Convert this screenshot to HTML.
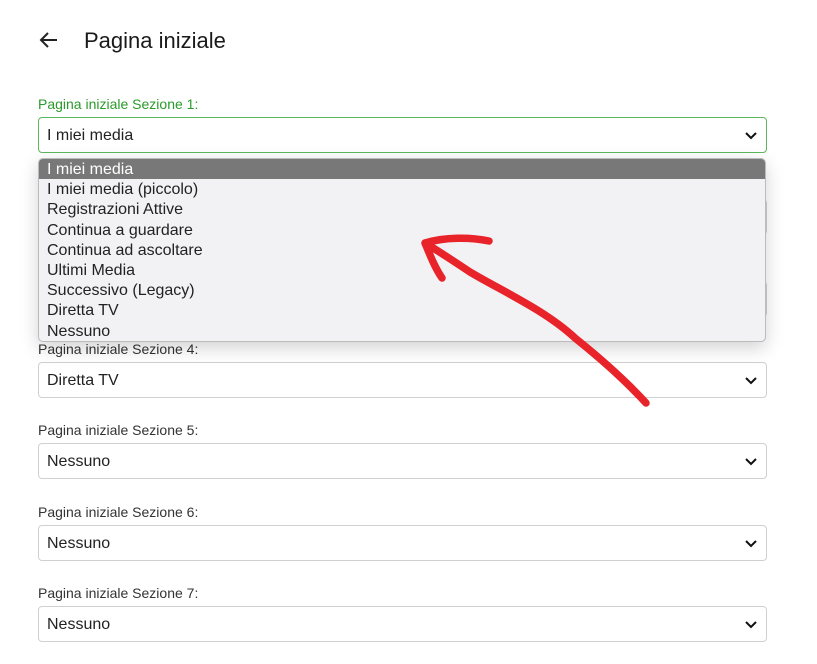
<!DOCTYPE html>
<html><head><meta charset="utf-8"><style>
body{margin:0;width:817px;height:664px;background:#fff;font-family:"Liberation Sans",Roboto,sans-serif;position:relative;overflow:hidden;color:#222}
.t{position:absolute;left:84px;top:28px;font-size:22px;color:#1a1a1a}
.lbl{position:absolute;left:38px;font-size:14px;color:#333}
.sel{position:absolute;left:38px;width:727px;height:34px;border:1px solid #d0d0d0;border-radius:4px;background:#fff;box-sizing:content-box}
.sel span{position:absolute;left:8px;top:9px;font-size:16px;color:#222}
.sel svg{position:absolute;right:8px;top:13px}
.dd{position:absolute;left:38px;top:158px;width:726px;height:182px;background:#f2f2f4;border:1px solid #bbb;border-radius:5px;box-shadow:0 6px 18px rgba(0,0,0,.18);overflow:hidden}
.dd div{height:20.2px;line-height:21px;padding-left:8px;font-size:16px;color:#222}
.dd .h{background:#787878;color:#fff}
</style></head><body>
<svg style="position:absolute;left:38px;top:31px" width="20" height="18" viewBox="0 0 20 18"><path d="M19 9H3M10 2L3 9l7 7" fill="none" stroke="#222" stroke-width="2"/></svg>
<div class="t">Pagina iniziale</div>
<div class="lbl" style="top:96px;color:#2a9a2a">Pagina iniziale Sezione 1:</div>
<div class="sel" style="top:117px;border-color:#5cb85c"><span>I miei media</span><svg width="14" height="10"><path d="M2 2l5 5 5-5" fill="none" stroke="#111" stroke-width="2"/></svg></div>
<div class="sel" style="top:199px"><span></span></div>
<div class="sel" style="top:281px"><span></span><svg width="14" height="10"><path d="M2 2l5 5 5-5" fill="none" stroke="#111" stroke-width="2"/></svg></div>
<div class="lbl" style="top:341px">Pagina iniziale Sezione 4:</div>
<div class="sel" style="top:362px"><span>Diretta TV</span><svg width="14" height="10"><path d="M2 2l5 5 5-5" fill="none" stroke="#111" stroke-width="2"/></svg></div>
<div class="lbl" style="top:422px">Pagina iniziale Sezione 5:</div>
<div class="sel" style="top:443px"><span>Nessuno</span><svg width="14" height="10"><path d="M2 2l5 5 5-5" fill="none" stroke="#111" stroke-width="2"/></svg></div>
<div class="lbl" style="top:504px">Pagina iniziale Sezione 6:</div>
<div class="sel" style="top:525px"><span>Nessuno</span><svg width="14" height="10"><path d="M2 2l5 5 5-5" fill="none" stroke="#111" stroke-width="2"/></svg></div>
<div class="lbl" style="top:585px">Pagina iniziale Sezione 7:</div>
<div class="sel" style="top:606px"><span>Nessuno</span><svg width="14" height="10"><path d="M2 2l5 5 5-5" fill="none" stroke="#111" stroke-width="2"/></svg></div>
<div class="dd">
<div class="h">I miei media</div><div>I miei media (piccolo)</div><div>Registrazioni Attive</div><div>Continua a guardare</div><div>Continua ad ascoltare</div><div>Ultimi Media</div><div>Successivo (Legacy)</div><div>Diretta TV</div><div>Nessuno</div>
</div>
<svg style="position:absolute;left:0;top:0" width="817" height="664"><path d="M646 403C625 380 600 358 575 338C545 310 500 290 470 272C455 262 440 252 425 243M425 243C445 237 470 237 489 241M425 243C430 255 435 268 442 278" fill="none" stroke="#e8242a" stroke-width="7.5" stroke-linecap="round" stroke-linejoin="round"/></svg>
</body></html>
